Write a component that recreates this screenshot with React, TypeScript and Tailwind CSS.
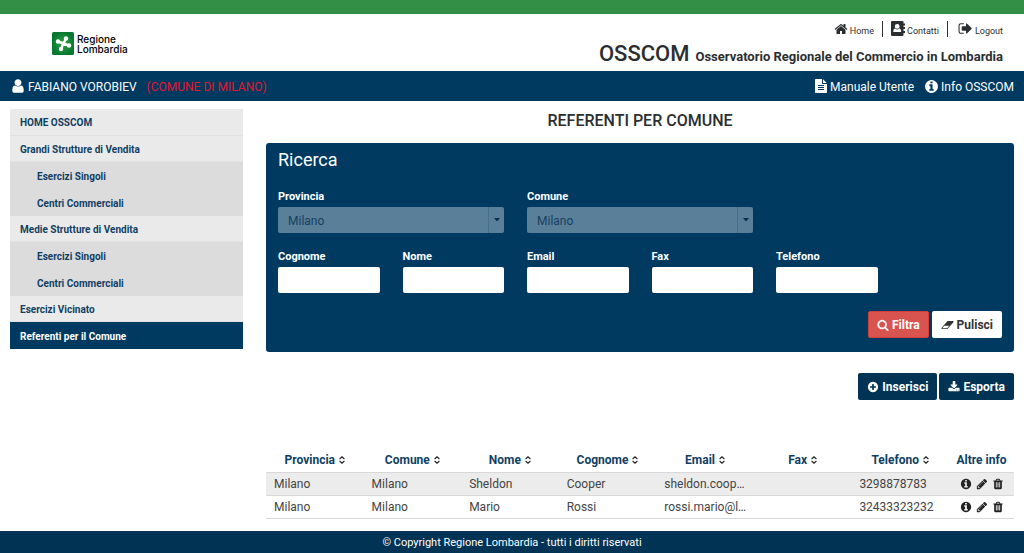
import React from "react";

// 1792-unit glyph paths
const ICONS = {
  home: "M1472 992v480q0 26-19 45t-45 19h-384v-384h-256v384h-384q-26 0-45-19t-19-45v-480q0-1 .5-3t.5-3l575-474 575 474q1 2 1 6zm223-69l-62 74q-8 9-21 11h-3q-13 0-21-7l-692-577-692 577q-12 8-24 7-13-2-21-11l-62-74q-8-10-7-23.5t11-21.5l719-599q32-26 76-26t76 26l244 204v-195q0-14 9-23t23-9h192q14 0 23 9t9 23v408l219 182q10 8 11 21.5t-7 23.5z",
  signOut: "M704 1440q0 4 1 20t.5 26.5-3 23.5-10 19.5-20.5 6.5h-320q-119 0-203.5-84.5t-84.5-203.5v-704q0-119 84.5-203.5t203.5-84.5h320q13 0 22.5 9.5t9.5 22.5q0 4 1 20t.5 26.5-3 23.5-10 19.5-20.5 6.5h-320q-66 0-113 47t-47 113v704q0 66 47 113t113 47h312l11.5 1 11.5 3 8 5.5 7 9 2 13.5zm928-544q0 26-19 45l-544 544q-19 19-45 19t-45-19-19-45v-288h-448q-26 0-45-19t-19-45v-384q0-26 19-45t45-19h448v-288q0-26 19-45t45-19 45 19l544 544q19 19 19 45z",
  user: "M1536 1399q0 109-62.5 187t-150.5 78h-854q-88 0-150.5-78t-62.5-187q0-85 8.5-160.5t31.5-152 58.5-131 94-89 134.5-34.5q131 128 313 128t313-128q76 0 134.5 34.5t94 89 58.5 131 31.5 152 8.5 160.5zm-256-887q0 159-112.5 271.5t-271.5 112.5-271.5-112.5-112.5-271.5 112.5-271.5 271.5-112.5 271.5 112.5 112.5 271.5z",
  file: "M1596 476q14 14 28 36h-472v-472q22 14 36 28zm-476 164h544v1056q0 40-28 68t-68 28h-1344q-40 0-68-28t-28-68v-1600q0-40 28-68t68-28h800v544q0 40 28 68t68 28zm160 736v-64q0-14-9-23t-23-9h-704q-14 0-23 9t-9 23v64q0 14 9 23t23 9h704q14 0 23-9t9-23zm0-256v-64q0-14-9-23t-23-9h-704q-14 0-23 9t-9 23v64q0 14 9 23t23 9h704q14 0 23-9t9-23zm0-256v-64q0-14-9-23t-23-9h-704q-14 0-23 9t-9 23v64q0 14 9 23t23 9h704q14 0 23-9t9-23z",
  info: "M1152 1376v-160q0-14-9-23t-23-9h-96v-512q0-14-9-23t-23-9h-320q-14 0-23 9t-9 23v160q0 14 9 23t23 9h96v320h-96q-14 0-23 9t-9 23v160q0 14 9 23t23 9h448q14 0 23-9t9-23zm-128-896v-160q0-14-9-23t-23-9h-192q-14 0-23 9t-9 23v160q0 14 9 23t23 9h192q14 0 23-9t9-23zm640 416q0 209-103 385.5t-279.5 279.5-385.5 103-385.5-103-279.5-279.5-103-385.5 103-385.5 279.5-279.5 385.5-103 385.5 103 279.5 279.5 103 385.5z",
  search: "M1216 832q0-185-131.5-316.5t-316.5-131.5-316.5 131.5-131.5 316.5 131.5 316.5 316.5 131.5 316.5-131.5 131.5-316.5zm512 832q0 52-38 90t-90 38q-54 0-90-38l-343-342q-179 124-399 124-143 0-273.5-55.5t-225-150-150-225-55.5-273.5 55.5-273.5 150-225 225-150 273.5-55.5 273.5 55.5 225 150 150 225 55.5 273.5q0 220-124 399l343 343q37 37 37 90z",
  eraser: "M960 1408l336-384h-768l-336 384h768zm1013-1077q15 34 9.5 71.5t-30.5 65.5l-896 1024q-38 44-96 44h-768q-38 0-69.5-20.5t-47.5-54.5q-15-34-9.5-71.5t30.5-65.5l896-1024q38-44 96-44h768q38 0 69.5 20.5t47.5 54.5z",
  plus: "M1344 960v-128q0-26-19-45t-45-19h-256v-256q0-26-19-45t-45-19h-128q-26 0-45 19t-19 45v256h-256q-26 0-45 19t-19 45v128q0 26 19 45t45 19h256v256q0 26 19 45t45 19h128q26 0 45-19t19-45v-256h256q26 0 45-19t19-45zm320-64q0 209-103 385.5t-279.5 279.5-385.5 103-385.5-103-279.5-279.5-103-385.5 103-385.5 279.5-279.5 385.5-103 385.5 103 279.5 279.5 103 385.5z",
  download: "M1344 1344q0-26-19-45t-45-19-45 19-19 45 19 45 45 19 45-19 19-45zm256 0q0-26-19-45t-45-19-45 19-19 45 19 45 45 19 45-19 19-45zm128-224v320q0 40-28 68t-68 28h-1472q-40 0-68-28t-28-68v-320q0-40 28-68t68-28h465l135 136q58 56 136 56t136-56l136-136h464q40 0 68 28t28 68zm-325-569q17 41-14 70l-448 448q-18 19-45 19t-45-19l-448-448q-31-29-14-70 17-39 59-39h256v-448q0-26 19-45t45-19h256q26 0 45 19t19 45v448h256q42 0 59 39z",
  pencil: "M491 1536l91-91-235-235-91 91v107h128v128h107zm523-928q0-22-22-22-10 0-17 7l-542 542q-7 7-7 17 0 22 22 22 10 0 17-7l542-542q7-7 7-17zm-54-192l416 416-832 832h-416v-416zm683 96q0 53-37 90l-166 166-416-416 166-165q36-38 90-38 53 0 91 38l235 234q37 39 37 91z",
  trash: "M704 1376v-704q0-14-9-23t-23-9h-64q-14 0-23 9t-9 23v704q0 14 9 23t23 9h64q14 0 23-9t9-23zm256 0v-704q0-14-9-23t-23-9h-64q-14 0-23 9t-9 23v704q0 14 9 23t23 9h64q14 0 23-9t9-23zm256 0v-704q0-14-9-23t-23-9h-64q-14 0-23 9t-9 23v704q0 14 9 23t23 9h64q14 0 23-9t9-23zm-544-992h448l-48-117q-7-9-17-11h-317q-10 2-17 11zm928 32v64q0 14-9 23t-23 9h-96v948q0 83-47 143.5t-113 60.5h-832q-66 0-113-58.5t-47-141.5v-952h-96q-14 0-23-9t-9-23v-64q0-14 9-23t23-9h309l70-167q15-37 54-63t79-26h320q40 0 79 26t54 63l70 167h309q14 0 23 9t9 23z",
};

const Icon: React.FC<{ name: keyof typeof ICONS; className?: string }> = ({ name, className = "" }) => (
  <svg viewBox={name === "eraser" ? "0 0 2048 1792" : "0 0 1792 1792"} fill="currentColor" aria-hidden="true" className={`shrink-0 ${className}`}>
    <path d={ICONS[name]} />
  </svg>
);

const AddressBook = () => (
  <svg viewBox="0 0 14 15" fill="currentColor" aria-hidden="true" className="h-[15px] w-[14px] shrink-0">
    <path fillRule="evenodd" d="M1 0h10.500a1 1 0 0 1 1 1v1.500H14v2h-1.500V6H14v2h-1.500v2H14v2h-1.500v2a1 1 0 0 1-1 1H1a1 1 0 0 1-1-1V1a1 1 0 0 1 1-1zM6.200 3a2.400 2.400 0 1 0 0 4.800a2.400 2.400 0 0 0 0-4.800zM4.200 7.600C2.900 7.800 2.300 9 2.300 11h7.900c0-2-.7-3.200-2-3.400a3 3 0 0 1-4 0z" />
  </svg>
);

const Logo = () => (
  <div className="flex items-center gap-[3px]">
    <svg viewBox="0 0 22 23" aria-hidden="true" className="h-[23px] w-[22px]">
      <defs>
        <radialGradient id="rosa">
          <stop offset="0" stopColor="#2fa544" />
          <stop offset="1" stopColor="#087830" />
        </radialGradient>
      </defs>
      <rect width="22" height="23" rx="1.500" fill="url(#rosa)" />
      <g stroke="#fff" strokeWidth="2.400" strokeLinecap="round">
        <path d="M11.500 11.500L14 6.500M11.500 11.500L6 9.500M11.500 11.500L9 17M11.500 11.500L17 13.500" />
      </g>
      <g fill="#fff">
        <circle cx="14" cy="6.500" r="2.200" />
        <circle cx="6" cy="9.500" r="2.200" />
        <circle cx="9" cy="17" r="2.200" />
        <circle cx="17" cy="13.500" r="2.200" />
        <circle cx="11.500" cy="11.700" r="2.200" />
      </g>
    </svg>
    <div className="font-['Inter',sans-serif] text-[10px] leading-[10px] font-medium text-black">
      <span className="block">Regione</span>
      <span className="block">Lombardia</span>
    </div>
  </div>
);

const menu = [
  { label: "HOME OSSCOM" },
  { label: "Grandi Strutture di Vendita" },
  { label: "Esercizi Singoli", sub: true },
  { label: "Centri Commerciali", sub: true },
  { label: "Medie Strutture di Vendita" },
  { label: "Esercizi Singoli", sub: true },
  { label: "Centri Commerciali", sub: true },
  { label: "Esercizi Vicinato" },
  { label: "Referenti per il Comune", active: true },
];

const columns = ["Provincia", "Comune", "Nome", "Cognome", "Email", "Fax", "Telefono"];

const rows = [
  ["Milano", "Milano", "Sheldon", "Cooper", "sheldon.coop…", "", "3298878783"],
  ["Milano", "Milano", "Mario", "Rossi", "rossi.mario@l…", "", "32433323232"],
];

const SelectField: React.FC<{ id: string; label: string }> = ({ id, label }) => (
  <div className="col-span-2">
    <label htmlFor={id} className="block pt-[2px] leading-5 font-bold">{label}</label>
    <div className="relative h-[26px] overflow-hidden rounded-xs bg-[#5a7f99] text-[#173f61]">
      <select id={id} disabled className="h-full w-full appearance-none px-[10px] pt-[2px] text-xs opacity-100">
        <option>Milano</option>
      </select>
      <span className="pointer-events-none absolute inset-y-0 right-0 flex w-4 items-center justify-center border-l border-[#45708d] text-[#0b2f4f]">
        <svg viewBox="0 0 6 4" fill="currentColor" className="h-1 w-1.5"><path d="M0 0h6L3 3.500z" /></svg>
      </span>
    </div>
  </div>
);

const TextField: React.FC<{ id: string; label: string }> = ({ id, label }) => (
  <div>
    <label htmlFor={id} className="block pt-[2px] leading-5 font-bold">{label}</label>
    <input id={id} type="text" className="block h-[26px] w-full rounded-xs bg-white px-2 text-xs text-gray-800" />
  </div>
);

const Header = () => (
  <header>
    <div className="h-[14px] bg-[#348f46]" />
    <div className="flex h-[57px] justify-between pr-[21px] pl-[52px]">
      <div className="pt-[18px]"><Logo /></div>
      <div className="flex flex-col items-end gap-[6px] pt-[7px] text-[#2b2e30]">
        <nav className="flex h-[15px] items-center text-[9px] leading-3">
          <a href="#home" className="flex items-center gap-[2px] pr-2">
            <Icon name="home" className="size-[14px]" />
            <span className="pt-1">Home</span>
          </a>
          <a href="#contatti" className="flex items-center gap-[2px] border-l border-[#333] px-2">
            <AddressBook />
            <span className="pt-1">Contatti</span>
          </a>
          <a href="#logout" className="flex items-center gap-[2px] border-l border-[#333] pl-[10px]">
            <Icon name="signOut" className="size-[15px]" />
            <span className="pt-1">Logout</span>
          </a>
        </nav>
        <h1 className="flex items-baseline gap-[6px] leading-6">
          <span className="text-[22px] font-medium">OSSCOM</span>
          <span className="text-[13px] font-bold">Osservatorio Regionale del Commercio in Lombardia</span>
        </h1>
      </div>
    </div>
    <div className="flex h-[30px] items-center justify-between bg-[#003a61] px-[10px] text-xs text-white">
      <div className="flex items-center">
        <Icon name="user" className="mr-[2px] size-4" />
        <span className="pt-[2px]">FABIANO VOROBIEV</span>
        <span className="ml-[10px] pt-[2px] text-[#e0162f]">(COMUNE DI MILANO)</span>
      </div>
      <nav className="flex items-center gap-[10px]">
        <a href="#manuale" className="flex items-center gap-[2px]">
          <Icon name="file" className="size-[14px]" />
          <span className="pt-[2px]">Manuale Utente</span>
        </a>
        <a href="#info" className="flex items-center gap-[2px]">
          <Icon name="info" className="size-[15px]" />
          <span className="pt-[2px]">Info OSSCOM</span>
        </a>
      </nav>
    </div>
  </header>
);

const Sidebar = () => (
  <nav className="grid h-[240px] auto-rows-fr text-[10px] font-bold text-[#103f63]">
    {menu.map((item, i) => (
      <a
        key={i}
        href="#"
        className={`flex items-center pt-[2px] ${item.sub ? "bg-[#dcdcdc] pl-[27px]" : item.active ? "bg-[#003a61] pl-[10px] text-white" : "border-b border-[#e2e2e2] bg-[#eaeaea] pl-[10px]"}`}
      >
        {item.label}
      </a>
    ))}
  </nav>
);

const SearchPanel = () => (
  <form className="rounded-[3px] bg-[#003a61] px-3 pt-[6px] pb-[14px] text-[11px] text-white">
    <h3 className="text-lg leading-[22px]">Ricerca</h3>
    <div className="mt-[14px] grid grid-cols-6 gap-x-[23px] gap-y-3">
      <SelectField id="provincia" label="Provincia" />
      <SelectField id="comune" label="Comune" />
      <div className="col-span-2" />
      <TextField id="cognome" label="Cognome" />
      <TextField id="nome" label="Nome" />
      <TextField id="email" label="Email" />
      <TextField id="fax" label="Fax" />
      <TextField id="telefono" label="Telefono" />
    </div>
    <div className="mt-[18px] flex justify-end gap-[3px] text-xs font-bold">
      <button type="button" className="flex h-[27px] items-center gap-[3px] rounded-xs border border-[#d43f3a] bg-[#d9534f] px-2">
        <Icon name="search" className="size-3" />
        Filtra
      </button>
      <button type="button" className="flex h-[27px] items-center gap-[3px] rounded-xs bg-white px-[9px] text-[#333]">
        <Icon name="eraser" className="h-3 w-[13px]" />
        Pulisci
      </button>
    </div>
  </form>
);

const SortIcon = () => (
  <svg viewBox="0 0 6 8" fill="none" stroke="#222" strokeWidth="1.100" aria-hidden="true" className="h-2 w-1.5">
    <path d="M.6 3L3 .8 5.400 3M.6 5L3 7.200 5.400 5" />
  </svg>
);

const ResultsTable = () => (
  <table className="w-full table-fixed border-collapse text-xs text-[#444]">
    <thead>
      <tr className="h-6 text-[#103f63]">
        {columns.map((c) => (
          <th key={c} className="font-bold">
            <button type="button" className="inline-flex items-center gap-1">
              {c}
              <SortIcon />
            </button>
          </th>
        ))}
        <th className="w-[65px] font-bold whitespace-nowrap">Altre info</th>
      </tr>
    </thead>
    <tbody>
      {rows.map((r, i) => (
        <tr key={i} className="h-[23px] border-y border-[#d8d8d8] odd:bg-[#ececec]">
          {r.map((cell, j) => (
            <td key={j} className="truncate pl-2">{cell}</td>
          ))}
          <td>
            <div className="flex items-center justify-center gap-1 text-[#222]">
              <button type="button" aria-label="Dettaglio"><Icon name="info" className="size-3" /></button>
              <button type="button" aria-label="Modifica"><Icon name="pencil" className="size-3" /></button>
              <button type="button" aria-label="Elimina"><Icon name="trash" className="size-3" /></button>
            </div>
          </td>
        </tr>
      ))}
    </tbody>
  </table>
);

export default function App() {
  return (
    <div className="flex min-h-screen flex-col bg-white font-['Roboto',sans-serif]">
      <Header />
      <div className="grid flex-1 grid-cols-[233px_1fr] items-start gap-x-[23px] px-[10px] pt-2">
        <Sidebar />
        <main>
          <h2 className="pt-[2px] text-center text-base leading-5 font-medium text-[#2b2e30]">REFERENTI PER COMUNE</h2>
          <div className="mt-3"><SearchPanel /></div>
          <div className="mt-[21px] mb-12 flex justify-end gap-[2px] text-xs font-bold text-white">
            <button type="button" className="flex h-[27px] items-center gap-[3px] rounded-xs bg-[#003354] px-[9px]">
              <Icon name="plus" className="size-3" />
              Inserisci
            </button>
            <button type="button" className="flex h-[27px] items-center gap-[3px] rounded-xs bg-[#003354] px-[9px]">
              <Icon name="download" className="size-3" />
              Esporta
            </button>
          </div>
          <ResultsTable />
        </main>
      </div>
      <footer className="bg-[#003354] pt-[2px] text-center text-[11px] leading-5 text-white">
        © Copyright Regione Lombardia - tutti i diritti riservati
      </footer>
    </div>
  );
}
